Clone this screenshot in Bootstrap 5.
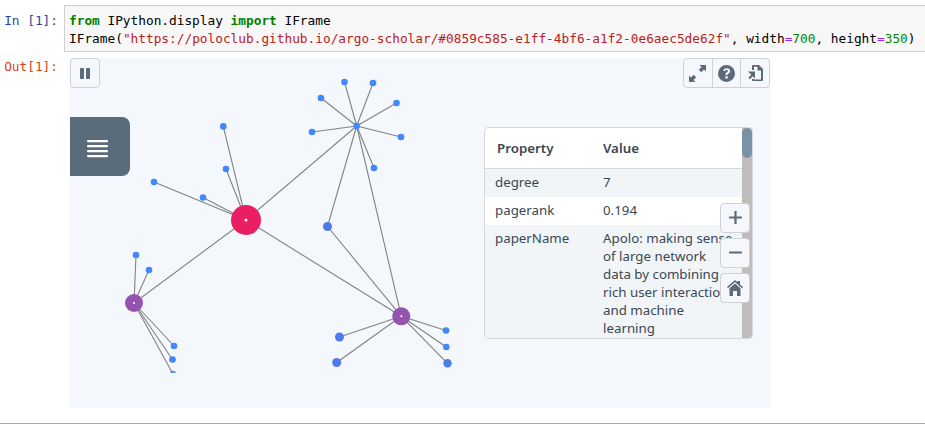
<!DOCTYPE html>
<html lang="en">
<head>
<meta charset="utf-8">
<title>Notebook</title>
<link href="https://cdn.jsdelivr.net/npm/bootstrap@5.3.0/dist/css/bootstrap.min.css" rel="stylesheet">
<style>
html,body{height:426px;overflow:hidden;background:#fff}
.nb-mono{font-family:"DejaVu Sans Mono","Liberation Mono",monospace;font-size:12.79px;line-height:17.5px}
.nb-prompt{width:64px;flex:none;padding:12px 6px 0 0;text-align:right;white-space:nowrap}
.nb-in{color:#303f9f}
.nb-out{color:#d84315;padding-top:0}
.nb-code{width:900px;flex:none;height:47px;margin-top:5px;padding:6px 4px 0;background:#f7f7f7;border:1px solid #cfcfcf;border-right:0;white-space:pre;color:#000}
.tk-k{color:#008000;font-weight:700}.tk-s{color:#ba2121}.tk-o{color:#a2f}.tk-n{color:#080}
.nb-outrow{margin-top:6px}
.nb-frame{position:relative;width:700px;height:350px;margin-left:6px;background:#f4f7fb;font-family:"Noto Sans","Open Sans",sans-serif;overflow:hidden}
.nb-canvas{position:absolute;left:0;top:0}
.gr-edge line{stroke:#828282;stroke-width:1.1}
.tool-btn{width:30px;height:30px;padding:0;display:flex;align-items:center;justify-content:center;background:#f5f7fa;border:1px solid #ccd2d8;border-radius:4px;color:#5a6a7a;--bs-btn-hover-bg:#f5f7fa}
.tool-btn svg{fill:#5a6a7a;display:block}
.pos-pause{position:absolute;left:0;top:0}
.pos-tools{position:absolute;right:0;top:0}
.pos-tools .tool-btn{width:29.67px}
.pos-zoom{position:absolute;left:650px;top:145px;gap:5.5px}
.pos-zoom .tool-btn{height:29.5px}
.pos-menu{position:absolute;left:0;top:59px;width:60px;height:59px;padding:5px 5px 0 0;background:#5a6b7b;border-radius:0 8px 8px 0;display:flex;align-items:center;justify-content:center}
.pos-panel{position:absolute;left:414px;top:69px;width:269px;height:212px;background:#fff;border:1px solid #d3d9df;border-radius:4px;overflow:hidden;color:#37474f;font-size:13.3px;line-height:18px}
.prop-table{width:257px;table-layout:fixed;margin:0;--bs-table-bg:transparent;--bs-table-color:#3a4754;font-size:13.3px}
.prop-table th{font-weight:600;height:40px;padding:0 0 0 12px;vertical-align:middle;border-bottom:1px solid #d3d9df}
.prop-table th+th{padding-left:0}
.prop-table td{padding:4px 0 6px 10px;border:0;vertical-align:top}
.prop-table td+td{padding:4px 9px 6px 0}
.prop-table .rw-odd td{background:#f2f5f8}
.prop-table col.c1{width:118px}
.prop-bar{position:absolute;right:0;top:0;bottom:0;width:10px;background:#c1bcbc}
.prop-thumb{width:10px;height:30px;background:#7a92a6;border-radius:5px}
.nb-rule{margin-top:15px;border-top:1px solid #aaa}
</style>
</head>
<body>
<div class="d-flex nb-mono">
  <div class="nb-prompt nb-in">In [1]:</div>
  <div class="nb-code"><div><span class="tk-k">from</span> IPython.display <span class="tk-k">import</span> IFrame</div><div>IFrame(<span class="tk-s">"https://poloclub.github.io/argo-scholar/#0859c585-e1ff-4bf6-a1f2-0e6aec5de62f"</span>, width<span class="tk-o">=</span><span class="tk-n">700</span>, height<span class="tk-o">=</span><span class="tk-n">350</span>)</div></div>
</div>
<div class="d-flex nb-mono nb-outrow">
  <div class="nb-prompt nb-out">Out[1]:</div>
  <div class="nb-frame">
    <svg class="nb-canvas" width="700" height="350" viewBox="70 58 700 350">
      <defs><clipPath id="gclip"><rect x="70" y="58" width="700" height="314.7"/></clipPath></defs>
      <g clip-path="url(#gclip)">
      <g class="gr-edge">
        <line x1="246" y1="220" x2="223.3" y2="126.4"/><line x1="246" y1="220" x2="226" y2="169"/>
        <line x1="246" y1="220" x2="154" y2="182"/><line x1="246" y1="220" x2="203" y2="197.5"/>
        <line x1="246" y1="220" x2="356.7" y2="126"/><line x1="246" y1="220" x2="134" y2="303"/>
        <line x1="246" y1="220" x2="401.3" y2="316.3"/>
        <line x1="356.7" y1="126" x2="344.5" y2="82"/><line x1="356.7" y1="126" x2="373" y2="83"/>
        <line x1="356.7" y1="126" x2="321" y2="98"/><line x1="356.7" y1="126" x2="396.5" y2="103"/>
        <line x1="356.7" y1="126" x2="312" y2="132"/><line x1="356.7" y1="126" x2="401" y2="137"/>
        <line x1="356.7" y1="126" x2="374" y2="168"/><line x1="356.7" y1="126" x2="327.5" y2="226.5"/>
        <line x1="356.7" y1="126" x2="401.3" y2="316.3"/><line x1="327.5" y1="226.5" x2="401.3" y2="316.3"/>
        <line x1="134" y1="303" x2="136" y2="255"/><line x1="134" y1="303" x2="149" y2="270"/>
        <line x1="134" y1="303" x2="174" y2="346"/><line x1="134" y1="303" x2="172.5" y2="359.5"/>
        <line x1="134" y1="303" x2="173" y2="374"/>
        <line x1="401.3" y1="316.3" x2="446" y2="330.5"/><line x1="401.3" y1="316.3" x2="446.3" y2="347"/>
        <line x1="401.3" y1="316.3" x2="447.5" y2="363.3"/><line x1="401.3" y1="316.3" x2="339.5" y2="337"/>
        <line x1="401.3" y1="316.3" x2="336.7" y2="362.5"/>
      </g>
      <g fill="#4088fc">
        <circle cx="223.3" cy="126.4" r="3.300"/><circle cx="226" cy="169" r="3.300"/><circle cx="154" cy="182" r="3.300"/><circle cx="203" cy="197.5" r="3.300"/>
        <circle cx="356.7" cy="126" r="3.300"/><circle cx="344.5" cy="82" r="3.300"/><circle cx="373" cy="83" r="3.300"/><circle cx="321" cy="98" r="3.300"/>
        <circle cx="396.5" cy="103" r="3.300"/><circle cx="312" cy="132" r="3.300"/><circle cx="401" cy="137" r="3.300"/><circle cx="374" cy="168" r="3.300"/>
        <circle cx="136" cy="255" r="3.300"/><circle cx="149" cy="270" r="3.300"/><circle cx="174" cy="346" r="3.300"/><circle cx="172.5" cy="359.5" r="3.300"/><circle cx="173" cy="374" r="3.300"/>
        <circle cx="446" cy="330.5" r="3.300"/><circle cx="446.3" cy="347" r="3.300"/>
      </g>
      <g fill="#4f7bea">
        <circle cx="327.5" cy="226.5" r="4.500"/><circle cx="447.5" cy="363.3" r="4.200"/><circle cx="339.5" cy="337" r="4.500"/><circle cx="336.7" cy="362.5" r="4.500"/>
      </g>
      <circle cx="246" cy="220" r="15" fill="#ea1e63"/>
      <circle cx="134" cy="303" r="9" fill="#9553b0"/>
      <circle cx="401.3" cy="316.3" r="9" fill="#9553b0"/>
      <g fill="#fff"><circle cx="246" cy="220" r="1.5"/><circle cx="134" cy="303" r="1"/><circle cx="401.3" cy="316.3" r="1"/></g>
      </g>
    </svg>

    <div class="pos-menu">
      <svg width="21" height="18" viewBox="0 0 21 18" fill="#fff"><rect y="0" width="21" height="2.200" rx="1"/><rect y="5" width="21" height="2.200" rx="1"/><rect y="10" width="21" height="2.200" rx="1"/><rect y="15" width="21" height="2.200" rx="1"/></svg>
    </div>

    <div class="pos-panel">
      <table class="table prop-table">
        <colgroup><col class="c1"><col></colgroup>
        <thead><tr><th>Property</th><th>Value</th></tr></thead>
        <tbody>
          <tr class="rw-odd"><td>degree</td><td>7</td></tr>
          <tr><td>pagerank</td><td>0.194</td></tr>
          <tr class="rw-odd"><td>paperName</td><td>Apolo: making sense of large network data by combining rich user interaction and machine learning</td></tr>
        </tbody>
      </table>
      <div class="prop-bar"><div class="prop-thumb"></div></div>
    </div>

    <button type="button" class="btn tool-btn pos-pause" aria-label="Pause">
      <svg width="10" height="11" viewBox="0 0 10 11"><rect x="0" width="4" height="11" rx=".8"/><rect x="6" width="4" height="11" rx=".8"/></svg>
    </button>

    <div class="btn-group pos-tools" role="group">
      <button type="button" class="btn tool-btn" aria-label="Fullscreen">
        <svg width="17" height="17" viewBox="0 0 17 17"><path d="M10.500 0h5.500a1 1 0 0 1 1 1v5.500l-2-2-2.700 2.700-2.500-2.500 2.700-2.700zM6.500 17H1a1 1 0 0 1-1-1v-5.500l2 2 2.700-2.700 2.500 2.500-2.700 2.700z"/></svg>
      </button>
      <button type="button" class="btn tool-btn" aria-label="Help">
        <svg width="17" height="17" viewBox="0 0 17 17"><path fill-rule="evenodd" d="M8.500 0a8.500 8.500 0 1 1 0 17 8.500 8.500 0 0 1 0-17zM8.700 3.300c-2 0-3.100 1-3.500 2.300l1.700.7c.3-.7.800-1.200 1.700-1.200.8 0 1.300.4 1.300 1 0 .5-.4.800-1 1.200-.8.500-1.400 1-1.400 2.100v.6h2.200v-.4c0-.5.300-.8.900-1.200.8-.5 1.600-1.100 1.600-2.400 0-1.700-1.500-2.700-3.500-2.700zM7.300 11.300v2.300h2.500v-2.300z"/></svg>
      </button>
      <button type="button" class="btn tool-btn" aria-label="Import">
        <svg width="15" height="16" viewBox="0 0 15 16"><path fill-rule="evenodd" d="M5 0h6l4 4v11a1 1 0 0 1-1 1H5a1 1 0 0 1-1-1v-1h2v.500h7V5.500H9.500V1.800H6V5H4V1a1 1 0 0 1 1-1zM0 6.500h7v7l-2.200-2.200-3 3-1.500-1.500 3-3z"/></svg>
      </button>
    </div>

    <div class="d-flex flex-column pos-zoom">
      <button type="button" class="btn tool-btn" aria-label="Zoom in">
        <svg width="13" height="13" viewBox="0 0 13 13"><rect x="5.400" width="2.200" height="13" rx=".5"/><rect y="5.400" width="13" height="2.200" rx=".5"/></svg>
      </button>
      <button type="button" class="btn tool-btn" aria-label="Zoom out">
        <svg width="13" height="3" viewBox="0 0 13 3"><rect y=".4" width="13" height="2.200" rx=".5"/></svg>
      </button>
      <button type="button" class="btn tool-btn" aria-label="Home">
        <svg width="16" height="16" viewBox="0 0 16 16"><path d="M8 0l2.500 2.200V1H13v3.400l3 2.700-1 1.100L8 2 1 8.200 0 7.100zM8 3.400l5.500 4.800V16H10v-5H6v5H2.500V8.200z"/></svg>
      </button>
    </div>
  </div>
</div>
<div class="nb-rule"></div>
</body>
</html>
